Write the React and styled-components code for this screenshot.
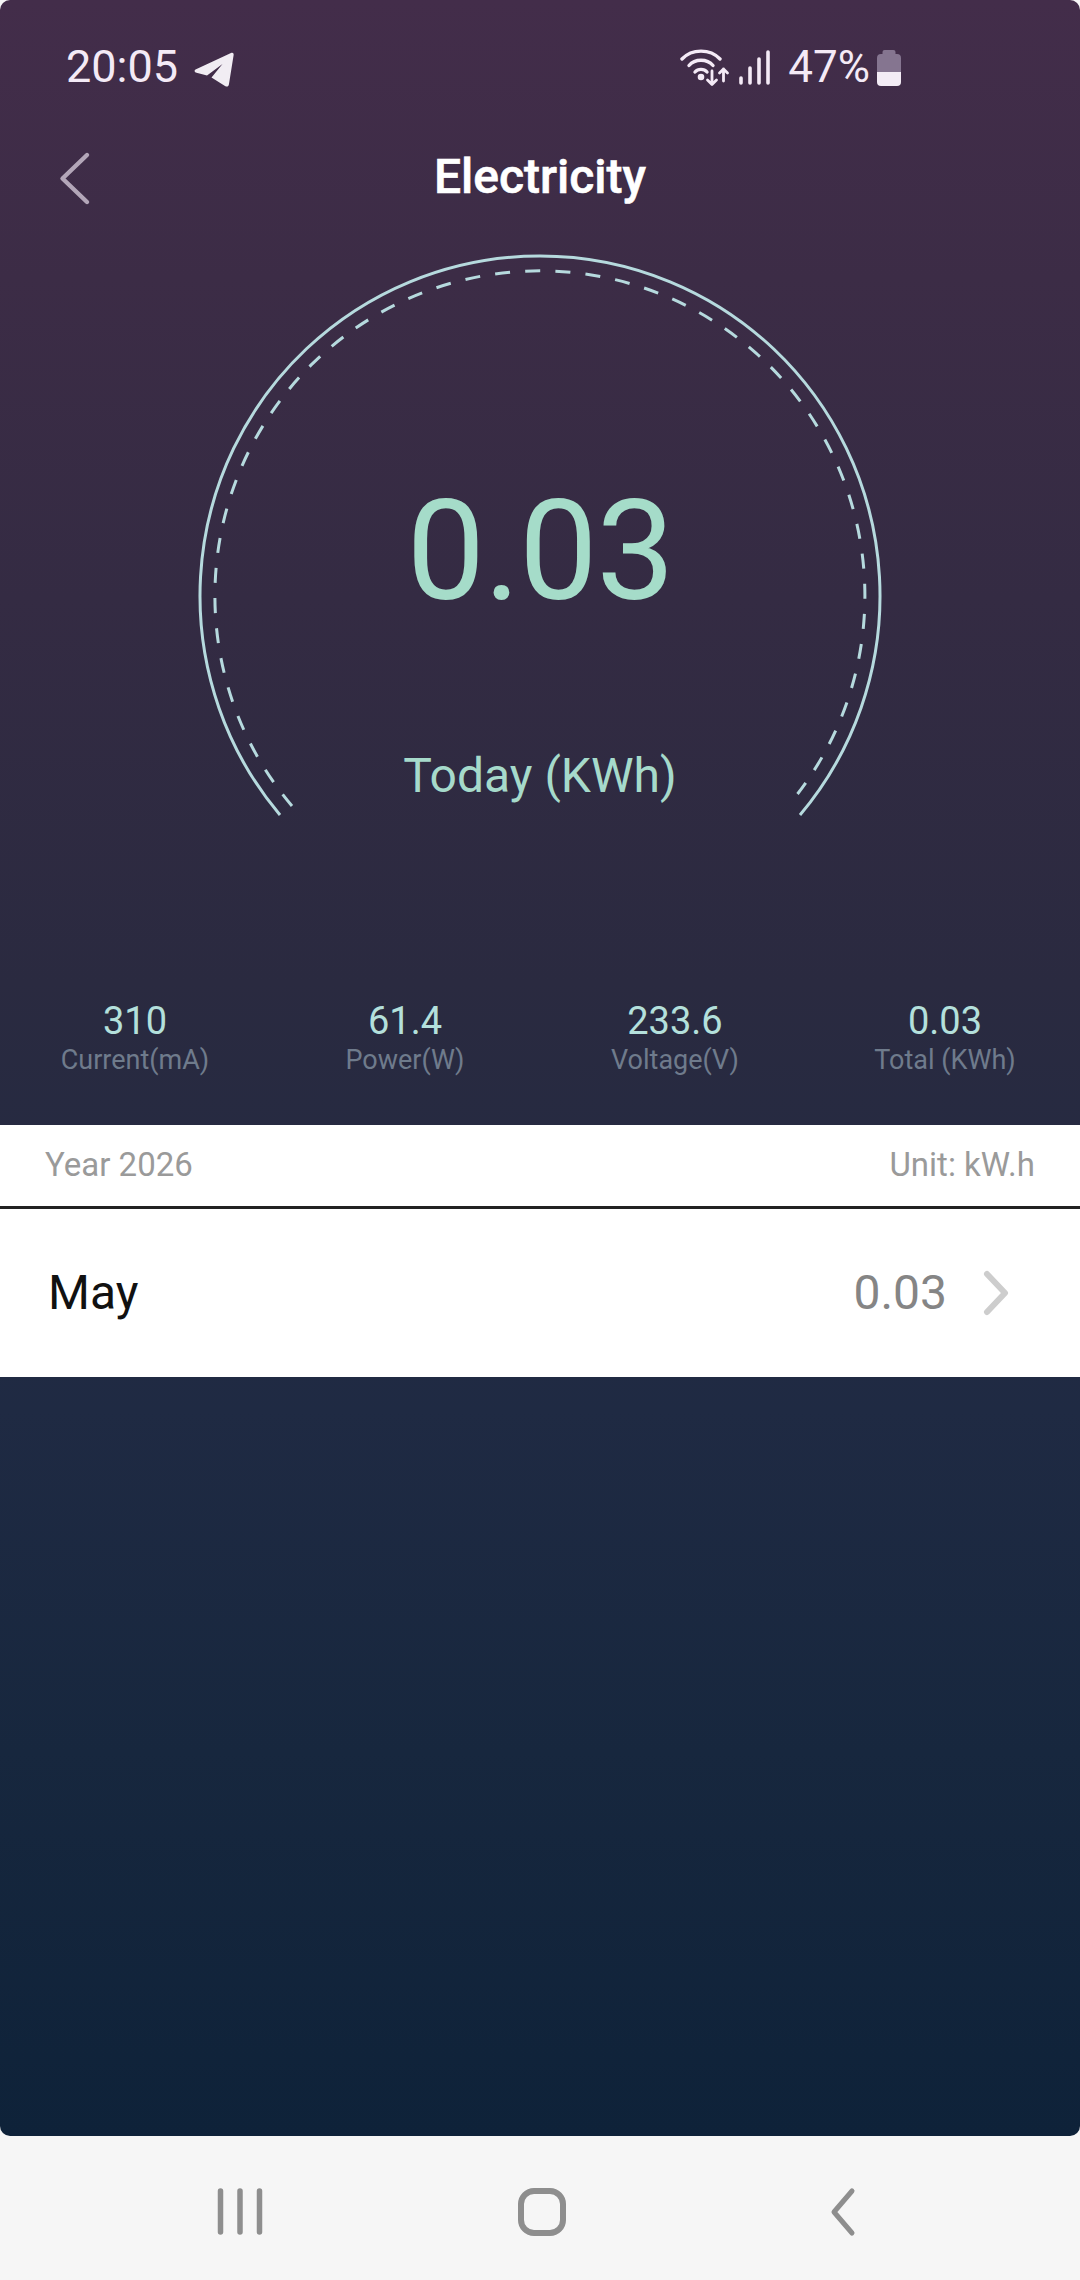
import React from 'react'
import styled, { createGlobalStyle } from 'styled-components'

const stats = [
  { value: '310', label: 'Current(mA)' },
  { value: '61.4', label: 'Power(W)' },
  { value: '233.6', label: 'Voltage(V)' },
  { value: '0.03', label: 'Total (KWh)' },
]

const Global = createGlobalStyle`
  html, body { margin: 0; padding: 0; background: #f5f5f5; }
  body { font-family: Roboto, "Liberation Sans", sans-serif; }
  * { box-sizing: border-box; }
`

const Page = styled.div`
  width: 1080px;
  height: 2280px;
  display: flex;
  flex-direction: column;
  background: #f6f6f6;
`

const Panel = styled.div`
  height: 2136px;
  display: flex;
  flex-direction: column;
  border-radius: 10px;
  overflow: hidden;
  background: linear-gradient(180deg, #432d4a 0%, #3c2c46 13%, #342b43 28%, #2a2a40 46%, #1f2a43 66%, #17273e 82%, #0e2239 100%);
`

const StatusBar = styled.div`
  height: 136px;
  padding: 44px 0 0 66px;
  display: flex;
  align-items: flex-start;
  color: #f4eaf6;
`

const Clock = styled.span`
  font-size: 45px;
  line-height: 46px;
`

const Plane = styled.svg`
  width: 40px;
  height: 36px;
  margin: 8px 0 0 16px;
`

const StatusRight = styled.div`
  margin-left: auto;
  padding-right: 179px;
  display: flex;
  align-items: flex-start;
`

const Wifi = styled.svg`
  width: 50px;
  height: 40px;
  margin-top: 5px;
`

const Signal = styled.svg`
  width: 36px;
  height: 36px;
  margin: 6px 0 0 7px;
`

const Percent = styled.span`
  font-size: 44px;
  line-height: 46px;
  margin-left: 15px;
`

const Battery = styled.svg`
  width: 24px;
  height: 36px;
  margin: 6px 0 0 7px;
`

const TitleBar = styled.div`
  height: 108px;
  margin-top: -4px;
  position: relative;
  display: flex;
  align-items: center;
  justify-content: center;
`

const Back = styled.svg`
  position: absolute;
  left: 58px;
  top: 19px;
  width: 34px;
  height: 56px;
`

const Title = styled.h1`
  margin: 0 0 20px;
  font-size: 48px;
  font-weight: 500;
  color: #fff;
  -webkit-text-stroke: 0.6px #fff;
`

const Gauge = styled.div`
  position: relative;
  width: 720px;
  height: 600px;
  margin: 0 auto;
  display: flex;
  flex-direction: column;
  align-items: center;
  padding-top: 246px;
  color: #a5dcc9;
`

const Dial = styled.svg`
  position: absolute;
  left: 0;
  top: 0;
  width: 720px;
  height: 600px;
`

const Reading = styled.div`
  font-size: 140px;
  line-height: 130px;
  letter-spacing: -1.5px;
  position: relative;
`

const ReadingLabel = styled.div`
  margin-top: 132px;
  font-size: 48px;
  line-height: 56px;
  position: relative;
  color: #a6dacb;
`

const Stats = styled.div`
  margin-top: 159px;
  height: 126px;
  display: grid;
  grid-template-columns: repeat(4, 1fr);
`

const Stat = styled.div`
  display: flex;
  flex-direction: column;
  align-items: center;
`

const StatValue = styled.span`
  font-size: 38px;
  line-height: 44px;
  color: #b4e0dc;
`

const StatLabel = styled.span`
  font-size: 27px;
  line-height: 34px;
  color: #6f7b8c;
`

const YearRow = styled.div`
  height: 84px;
  padding: 0 45px 3px;
  background: #fff;
  border-bottom: 3px solid #222;
  display: flex;
  align-items: center;
  justify-content: space-between;
  font-size: 33px;
  color: #9a9a9a;
`

const MonthRow = styled.div`
  height: 168px;
  padding: 0 70px 1px 48px;
  background: #fff;
  display: flex;
  align-items: center;
  font-size: 48px;
  color: #111;
`

const MonthValue = styled.span`
  margin-left: auto;
  color: #858585;
`

const Chevron = styled.svg`
  width: 28px;
  height: 46px;
  margin-left: 35px;
`

const NavBar = styled.div`
  flex: 1;
  padding: 50px 0 0 89px;
  display: flex;
  align-items: flex-start;
`

const NavSlot = styled.div`
  width: 302px;
  display: flex;
  justify-content: center;
`

const NavIcon = styled.svg`
  width: 60px;
  height: 52px;
  stroke: #8e8e8e;
  fill: none;
  stroke-linecap: round;
  stroke-linejoin: round;
`

export default function App() {
  return (
    <Page>
      <Global />
      <Panel>
        <StatusBar>
          <Clock>20:05</Clock>
          <Plane viewBox="0 0 40 36">
            <path
              d="M1.5 17.5 L37 1 C39 .3 40 1.3 39.6 3.2 L35 32 C34.5 34.8 33 35 31 34 L17.5 25.5 L28.5 12 L13 23.5 L2.5 20.8 C.3 20.2 0 18.5 1.5 17.5Z"
              fill="#f1edf3"
            />
          </Plane>
          <StatusRight>
            <Wifi viewBox="0 0 50 40" fill="none" stroke="#f4eaf6" strokeWidth="3.4" strokeLinecap="round" strokeLinejoin="round">
              <path d="M2 10 C12 -.5 30 -.5 40 10" />
              <path d="M9 16.5 C15 9.5 27 9.5 33 16.5" />
              <path d="M15 23 C18 19.5 24 19.5 27 23" />
              <circle cx="21" cy="28" r="1.6" fill="#f4eaf6" />
              <path d="M32 22 V35 M27.5 31 L32 35.5 L36.5 31" strokeWidth="2.8" />
              <path d="M43.5 32 V20 M39.5 24 L43.5 20 L47.5 24" strokeWidth="2.8" />
            </Wifi>
            <Signal viewBox="0 0 36 36" fill="none" stroke="#f4eaf6" strokeWidth="3.6" strokeLinecap="round">
              <path d="M4 28 V33" />
              <path d="M13 18 V33" />
              <path d="M22 9 V33" />
              <path d="M31 2 V33" />
            </Signal>
            <Percent>47%</Percent>
            <Battery viewBox="0 0 24 36">
              <path d="M5.5 4 V2 Q5.5 0 7.5 0 H16.5 Q18.5 0 18.5 2 V4 H20 Q24 4 24 8 V22 H0 V8 Q0 4 4 4 Z" fill="#857590" />
              <path d="M0 22 H24 V32 Q24 36 20 36 H4 Q0 36 0 32 Z" fill="#f3ecf5" />
            </Battery>
          </StatusRight>
        </StatusBar>
        <TitleBar>
          <Back viewBox="0 0 34 56" fill="none" stroke="#b3a6b8" strokeWidth="4.4" strokeLinecap="round" strokeLinejoin="round">
            <path d="M29 4 L4.5 27.5 L29 51" />
          </Back>
          <Title>Electricity</Title>
        </TitleBar>
        <Gauge>
          <Dial viewBox="0 0 720 600" fill="none" stroke="#b6dade">
            <path d="M100 575 A340 340 0 1 1 620 575" strokeWidth="3" />
            <path d="M112 566 A325 325 0 1 1 617.5 554" strokeWidth="3" strokeDasharray="15 15.17" />
          </Dial>
          <Reading>0.03</Reading>
          <ReadingLabel>Today (KWh)</ReadingLabel>
        </Gauge>
        <Stats>
          {stats.map((s) => (
            <Stat key={s.label}>
              <StatValue>{s.value}</StatValue>
              <StatLabel>{s.label}</StatLabel>
            </Stat>
          ))}
        </Stats>
        <YearRow>
          <span>Year 2026</span>
          <span>Unit: kW.h</span>
        </YearRow>
        <MonthRow>
          <span>May</span>
          <MonthValue>0.03</MonthValue>
          <Chevron viewBox="0 0 28 46" fill="none" stroke="#cdcdcd" strokeWidth="6" strokeLinecap="round" strokeLinejoin="round">
            <path d="M5 4 L23 23 L5 42" />
          </Chevron>
        </MonthRow>
      </Panel>
      <NavBar>
        <NavSlot>
          <NavIcon viewBox="0 0 60 52" strokeWidth="5.5">
            <path d="M10.5 5 V46 M30 5 V46 M49.5 5 V46" />
          </NavIcon>
        </NavSlot>
        <NavSlot>
          <NavIcon viewBox="0 0 60 52" strokeWidth="6">
            <rect x="9" y="5" width="42" height="42" rx="13" />
          </NavIcon>
        </NavSlot>
        <NavSlot>
          <NavIcon viewBox="0 0 60 52" strokeWidth="5">
            <path d="M38 5 L20 26 L38 47" />
          </NavIcon>
        </NavSlot>
      </NavBar>
    </Page>
  )
}
